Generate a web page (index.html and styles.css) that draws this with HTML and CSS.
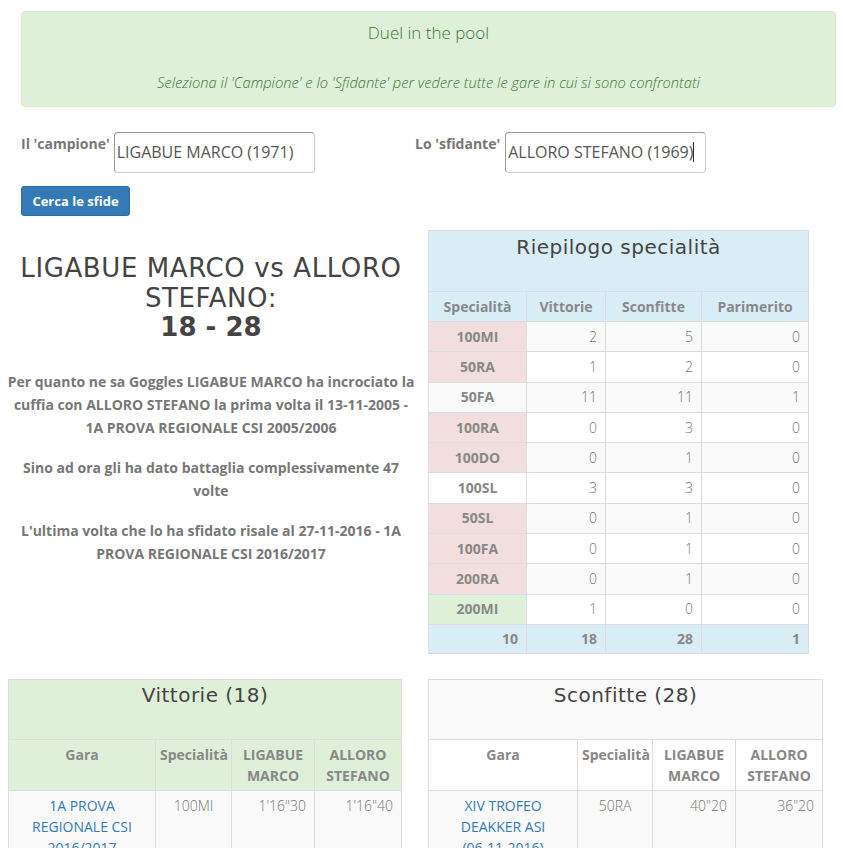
FILE: index.html
```html
<!DOCTYPE html>
<html lang="it">
<head>
<meta charset="utf-8">
<title>Duel in the pool</title>
<link rel="stylesheet" href="styles.css">
</head>
<body>
<div class="alert">
  <h1 class="alert-title">Duel in the pool</h1>
  <p class="alert-sub">Seleziona il 'Campione' e lo 'Sfidante' per vedere tutte le gare in cui si sono confrontati</p>
</div>

<form class="search">
  <div class="fields">
    <div class="field">
      <label>Il 'campione'</label>
      <input class="input" type="text" value="LIGABUE MARCO (1971)">
    </div>
    <div class="field">
      <label>Lo 'sfidante'</label>
      <div class="input fake">ALLORO STEFANO (1969)<span class="caret"></span></div>
    </div>
  </div>
  <button type="button" class="btn">Cerca le sfide</button>
</form>

<div class="main">
  <div class="left">
    <h2 class="duel">LIGABUE MARCO vs ALLORO STEFANO:<br><b>18 - 28</b></h2>
    <p class="info">Per quanto ne sa Goggles LIGABUE MARCO ha incrociato la cuffia con ALLORO STEFANO la prima volta il 13-11-2005 - 1A PROVA REGIONALE CSI 2005/2006</p>
    <p class="info">Sino ad ora gli ha dato battaglia complessivamente 47 volte</p>
    <p class="info">L'ultima volta che lo ha sfidato risale al 27-11-2016 - 1A PROVA REGIONALE CSI 2016/2017</p>
  </div>
  <div class="right">
    <table class="tbl summary">
      <colgroup><col class="c1"><col class="c2"><col class="c3"><col class="c4"></colgroup>
      <tr class="info-row cap"><th colspan="4">Riepilogo specialità</th></tr>
      <tr class="info-row head"><th>Specialità</th><th>Vittorie</th><th>Sconfitte</th><th>Parimerito</th></tr>
      <tr class="odd"><td class="sp danger">100MI</td><td>2</td><td>5</td><td>0</td></tr>
      <tr><td class="sp danger">50RA</td><td>1</td><td>2</td><td>0</td></tr>
      <tr class="odd"><td class="sp">50FA</td><td>11</td><td>11</td><td>1</td></tr>
      <tr><td class="sp danger">100RA</td><td>0</td><td>3</td><td>0</td></tr>
      <tr class="odd"><td class="sp danger">100DO</td><td>0</td><td>1</td><td>0</td></tr>
      <tr><td class="sp">100SL</td><td>3</td><td>3</td><td>0</td></tr>
      <tr class="odd"><td class="sp danger">50SL</td><td>0</td><td>1</td><td>0</td></tr>
      <tr><td class="sp danger">100FA</td><td>0</td><td>1</td><td>0</td></tr>
      <tr class="odd"><td class="sp danger">200RA</td><td>0</td><td>1</td><td>0</td></tr>
      <tr><td class="sp success">200MI</td><td>1</td><td>0</td><td>0</td></tr>
      <tr class="info-row foot"><td>10</td><td>18</td><td>28</td><td>1</td></tr>
    </table>
  </div>
</div>

<div class="results">
  <table class="tbl races wins">
    <colgroup><col class="g1"><col class="g2"><col class="g3"><col class="g4"></colgroup>
    <tr class="success cap"><th colspan="4">Vittorie (18)</th></tr>
    <tr class="success head"><th>Gara</th><th>Specialità</th><th>LIGABUE MARCO</th><th>ALLORO STEFANO</th></tr>
    <tr class="odd"><td class="race"><a href="#">1A PROVA REGIONALE CSI 2016/2017</a></td><td class="ctr">100MI</td><td>1'16"30</td><td>1'16"40</td></tr>
    <tr><td class="race"><a href="#">XIV TROFEO DEAKKER ASI <span class="nw">(06-11-2016)</span></a></td><td class="ctr">100SL</td><td>1'08"10</td><td>1'09"00</td></tr>
  </table>
  <table class="tbl races losses">
    <colgroup><col class="h1"><col class="h2"><col class="h3"><col class="h4"></colgroup>
    <tr class="odd cap"><th colspan="4">Sconfitte (28)</th></tr>
    <tr class="head"><th>Gara</th><th>Specialità</th><th>LIGABUE MARCO</th><th>ALLORO STEFANO</th></tr>
    <tr class="odd"><td class="race"><a href="#">XIV TROFEO DEAKKER ASI <span class="nw">(06-11-2016)</span></a></td><td class="ctr">50RA</td><td>40"20</td><td>36"20</td></tr>
    <tr><td class="race"><a href="#">1A PROVA REGIONALE CSI 2016/2017</a></td><td class="ctr">50RA</td><td>40"80</td><td>37"10</td></tr>
  </table>
</div>
</body>
</html>
```

FILE: styles.css
```css
* { box-sizing: border-box; }
html, body { margin: 0; padding: 0; background: #fff; }
body {
  font-family: "Open Sans", "Liberation Sans", sans-serif;
  font-size: 14px;
  color: #777;
  line-height: 1.5;
}

.alert {
  margin: 11px 7px 0 21px;
  height: 96px;
  background: #dff0d8;
  border: 1px solid #d6e9c6;
  border-radius: 4px;
  color: #3c763d;
  text-align: center;
  padding: 9px 15px;
}
.alert-title {
  margin: 0;
  font-size: 17px;
  font-weight: 300;
  line-height: 24px;
}
.alert-sub {
  margin: 27px 0 0;
  font-size: 14.7px;
  font-style: italic;
  font-weight: 300;
  line-height: 20px;
}

.search { margin: 25px 0 0 21px; }
.fields { display: flex; }
.field { display: flex; align-items: flex-start; width: 394px; }
.field label {
  font-weight: 700;
  color: #777;
  font-size: 14px;
  line-height: 20px;
  margin-top: 2px;
  margin-right: 4px;
}
.field + .field label { margin-right: 5px; }
.input {
  width: 201px;
  height: 41px;
  border: 1px solid #ccc;
  border-radius: 4px;
  border-top-color: #999;
  border-left-color: #999;
  font-family: "Open Sans", sans-serif;
  font-size: 16px;
  color: #555;
  padding: 0 2px 1px;
  margin: 0;
  background: #fff;
}
.fake { display: flex; align-items: center; }
.caret { display: inline-block; width: 1px; height: 20px; background: #333; }
.btn {
  margin-top: 13px;
  width: 109px;
  height: 30px;
  background: #337ab7;
  border: 1px solid #2e6da4;
  border-radius: 3px;
  color: #fff;
  font-family: "Open Sans", sans-serif;
  font-weight: 700;
  font-size: 13px;
  padding: 0;
}

.main { display: flex; margin-top: 14px; align-items: flex-start; }
.left { width: 428px; padding: 0 10px 0 4px; text-align: center; }
.right { width: 415px; }
.duel {
  margin: 24px 0 27px;
  font-family: "DejaVu Sans", "Noto Sans", sans-serif;
  font-weight: 400;
  font-size: 26px;
  letter-spacing: 0.6px;
  line-height: 29.5px;
  color: #444;
}
.duel b { font-weight: 700; letter-spacing: 0; }
.info {
  margin: 0 0 17px;
  font-weight: 700;
  line-height: 23px;
  color: #777;
}

.tbl { border-collapse: collapse; table-layout: fixed; }
.tbl th, .tbl td { border: 1px solid #ddd; }
.tbl tr.odd td, .tbl tr.odd th { background: #f9f9f9; }
.tbl .info-row th, .tbl .info-row td { background: #d9edf7; }
.tbl .success th, .tbl .success td, .tbl td.success { background: #dff0d8; }
.tbl td.danger { background: #f2dede; }
.tbl tr td.sp { background: #fff; }
.tbl tr.odd td.sp { background: #f9f9f9; }
.tbl tr td.sp.danger { background: #f2dede; }
.tbl tr td.sp.success { background: #dff0d8; }

.tbl .cap th {
  height: 61px;
  vertical-align: top;
  padding-top: 1px;
  font-family: "DejaVu Sans", "Noto Sans", sans-serif;
  font-weight: 400;
  font-size: 20px;
  letter-spacing: 0.5px;
  line-height: 30px;
  color: #444;
}
.summary { width: 380px; margin-top: 0; }
.summary .c1 { width: 98px; }
.summary .c2 { width: 79px; }
.summary .c3 { width: 96px; }
.summary .c4 { width: 107px; }
.summary .head th { height: 30px; padding: 0 8px; font-weight: 700; color: #888; line-height: 20px; }
.summary td {
  height: 30.3px;
  padding: 0 8px;
  text-align: right;
  font-weight: 300;
  color: #777;
  line-height: 20px;
}
.summary td.sp { text-align: center; font-weight: 700; color: #888; }
.summary .foot td { font-weight: 700; color: #888; height: 29px; }

.results { display: flex; margin-top: 25px; padding-left: 8px; gap: 26px; align-items: flex-start; }
.wins { width: 393px; }
.losses { width: 394px; }
.wins .g1 { width: 147px; }
.wins .g2 { width: 76px; }
.wins .g3 { width: 83px; }
.wins .g4 { width: 87px; }
.losses .h1 { width: 149px; }
.losses .h2 { width: 75px; }
.losses .h3 { width: 83px; }
.losses .h4 { width: 87px; }
.races .cap th { height: 60px; padding-top: 1px; line-height: 28px; }
.races .head th {
  height: 51px;
  vertical-align: top;
  padding: 4px 4px;
  font-weight: 700;
  color: #888;
  line-height: 21px;
  text-align: center;
}
.races td {
  vertical-align: top;
  padding: 4px 8px 8px;
  text-align: right;
  font-weight: 300;
  color: #777;
  line-height: 21px;
}
.races td.race, .races td.ctr { text-align: center; }
.races a { color: #337ab7; text-decoration: none; font-weight: 400; }
.nw { white-space: nowrap; }
```
